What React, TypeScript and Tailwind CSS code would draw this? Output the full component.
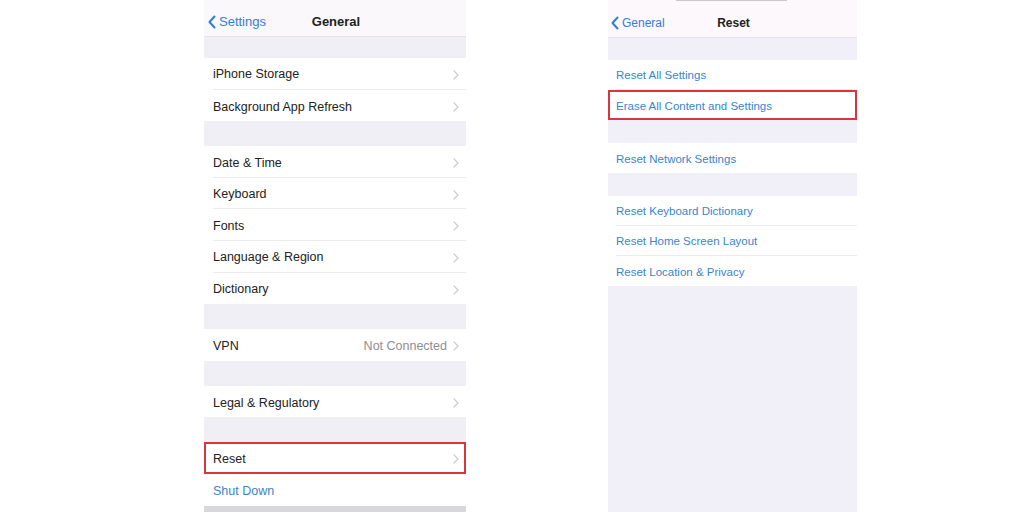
import React from 'react';

const font = { fontFamily: '"Liberation Sans", Arial, sans-serif' };

const Chevron = () => (
  <svg width="6" height="10" viewBox="0 0 6 10" className="shrink-0">
    <path d="M1 1l4 4-4 4" fill="none" stroke="#cacace" strokeWidth="1.1" strokeLinecap="round" strokeLinejoin="round" />
  </svg>
);

const BackChevron = () => (
  <svg width="8" height="14" viewBox="0 0 8 14" className="shrink-0">
    <path d="M6.5 1.5L1.5 7l5 5.5" fill="none" stroke="#2f7de1" strokeWidth="2" strokeLinecap="round" strokeLinejoin="round" />
  </svg>
);

type Row = { label: string; detail?: string; highlight?: boolean; link?: boolean };

const GeneralRow: React.FC<{ row: Row; last?: boolean }> = ({ row, last }) => (
  <div className={`relative h-[31.6px] bg-white pl-[9px] ${row.highlight ? 'outline-2 outline-[#d8363d] -outline-offset-2 z-10' : ''}`}>
    <div className={`flex h-full items-center pt-[3px] pr-[7px] ${last ? '' : 'border-b border-[#ececef]'}`}>
      <span className={`flex-1 text-[12.5px] ${row.link ? 'text-[#3a85cc]' : 'text-[#222]'}`}>{row.label}</span>
      {row.detail && <span className="mr-[6px] text-[12.5px] text-[#8e8e93]">{row.detail}</span>}
      {!row.link && <Chevron />}
    </div>
  </div>
);

const ResetRow: React.FC<{ row: Row; last?: boolean }> = ({ row, last }) => (
  <div className={`relative h-[30px] bg-white pl-[8px] ${row.highlight ? 'outline-2 outline-[#d8363d] -outline-offset-2 z-10' : ''}`}>
    <div className={`flex h-full items-center pt-[3px] ${last ? '' : 'border-b border-[#ececef]'}`}>
      <span className="text-[11.5px] text-[#3a85cc]">{row.label}</span>
    </div>
  </div>
);

const generalGroups: Row[][] = [
  [{ label: 'iPhone Storage' }, { label: 'Background App Refresh' }],
  [
    { label: 'Date & Time' },
    { label: 'Keyboard' },
    { label: 'Fonts' },
    { label: 'Language & Region' },
    { label: 'Dictionary' },
  ],
  [{ label: 'VPN', detail: 'Not Connected' }],
  [{ label: 'Legal & Regulatory' }],
  [{ label: 'Reset', highlight: true }, { label: 'Shut Down', link: true }],
];

const resetGroups: Row[][] = [
  [{ label: 'Reset All Settings' }, { label: 'Erase All Content and Settings', highlight: true }],
  [{ label: 'Reset Network Settings' }],
  [
    { label: 'Reset Keyboard Dictionary' },
    { label: 'Reset Home Screen Layout' },
    { label: 'Reset Location & Privacy' },
  ],
];

export default function App() {
  return (
    <div className="flex h-[512px] w-[1024px] overflow-hidden bg-white" style={font}>
      {/* General screen */}
      <div className="ml-[204px] flex w-[262px] flex-col bg-[#efeff5]">
        <div className="relative flex h-[37px] shrink-0 items-center justify-center bg-[#fbf8fb] pt-[8px] border-b border-[#e6e4ea]">
          <div className="absolute left-[4px] top-[8px] bottom-0 flex items-center gap-[3px]">
            <BackChevron />
            <span className="text-[13px] text-[#2f7de1]">Settings</span>
          </div>
          <span className="text-[13px] font-bold text-[#222] ml-[2px]">General</span>
        </div>
        <div className="flex flex-col gap-[25px] pt-[21px]">
          {generalGroups.map((g, i) => (
            <div key={i} className="flex flex-col">
              {g.map((r, j) => (
                <GeneralRow key={r.label} row={r} last={j === g.length - 1} />
              ))}
            </div>
          ))}
        </div>
        <div className="mt-auto h-[6px] bg-[#d8d8dc]" />
      </div>

      {/* Reset screen */}
      <div className="ml-[142px] flex w-[249px] flex-col bg-[#f1f0f8]">
        <div className="relative flex h-[38px] shrink-0 items-center justify-center bg-[#fcf8fb] pt-[9px] border-b border-[#e6e4ea]">
          <div className="absolute left-[68px] right-[70px] top-0 h-[1px] bg-[#c9c9cc]" />
          <div className="absolute left-[3px] top-[9px] bottom-0 flex items-center gap-[3px]">
            <BackChevron />
            <span className="text-[12px] text-[#2f7de1]">General</span>
          </div>
          <span className="text-[12px] font-bold text-[#222] ml-[2px]">Reset</span>
        </div>
        <div className="flex flex-col gap-[23px] pt-[22px]">
          {resetGroups.map((g, i) => (
            <div key={i} className="flex flex-col">
              {g.map((r, j) => (
                <ResetRow key={r.label} row={r} last={j === g.length - 1} />
              ))}
            </div>
          ))}
        </div>
      </div>
    </div>
  );
}
